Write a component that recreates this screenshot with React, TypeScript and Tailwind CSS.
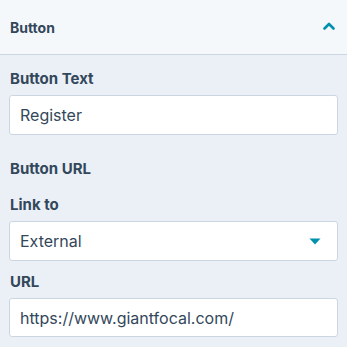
import React from "react";

export default function App() {
  const font = { fontFamily: "Inter, 'Noto Sans', sans-serif" };
  return (
    <div className="w-[347px] h-[347px] bg-[#eaf0f6] text-[#33475b] overflow-hidden" style={font}>
      <div className="h-[55px] bg-[#f5f8fa] border-b border-[#cbd6e2] flex items-center justify-between pl-[10px] pr-[12px]">
        <span className="text-[14px] font-bold">Button</span>
        <svg width="12" height="8" viewBox="0 0 12 8" className="mt-[-2px]">
          <path d="M1.5 6.5 L6 2 L10.5 6.5" fill="none" stroke="#0091ae" strokeWidth="2.6" strokeLinecap="round" strokeLinejoin="round" />
        </svg>
      </div>
      <div className="px-[9px] pt-[14px] flex flex-col">
        <label className="text-[15px] font-bold pl-px leading-[20px]">Button Text</label>
        <div className="mt-[6px] h-[40px] bg-white border border-[#cbd6e2] rounded-[3px] flex items-center px-[10px] text-[16px]">Register</div>
        <div className="mt-[24px] text-[15px] font-bold pl-px leading-[20px]">Button URL</div>
        <label className="mt-[16px] text-[15px] font-bold pl-px leading-[20px]">Link to</label>
        <div className="mt-[6px] h-[40px] bg-white border border-[#cbd6e2] rounded-[3px] flex items-center justify-between pl-[10px] pr-[16px] text-[16px]">
          <span>External</span>
          <svg width="12" height="7" viewBox="0 0 12 7">
            <path d="M0.5 0.5 L11.5 0.5 L6 6.5 Z" fill="#0091ae" />
          </svg>
        </div>
        <label className="mt-[11px] text-[15px] font-bold pl-px leading-[20px]">URL</label>
        <div className="mt-[6px] h-[39px] bg-white border border-[#cbd6e2] rounded-[3px] flex items-center px-[10px] text-[16px]">https://www.giantfocal.com/</div>
      </div>
    </div>
  );
}
